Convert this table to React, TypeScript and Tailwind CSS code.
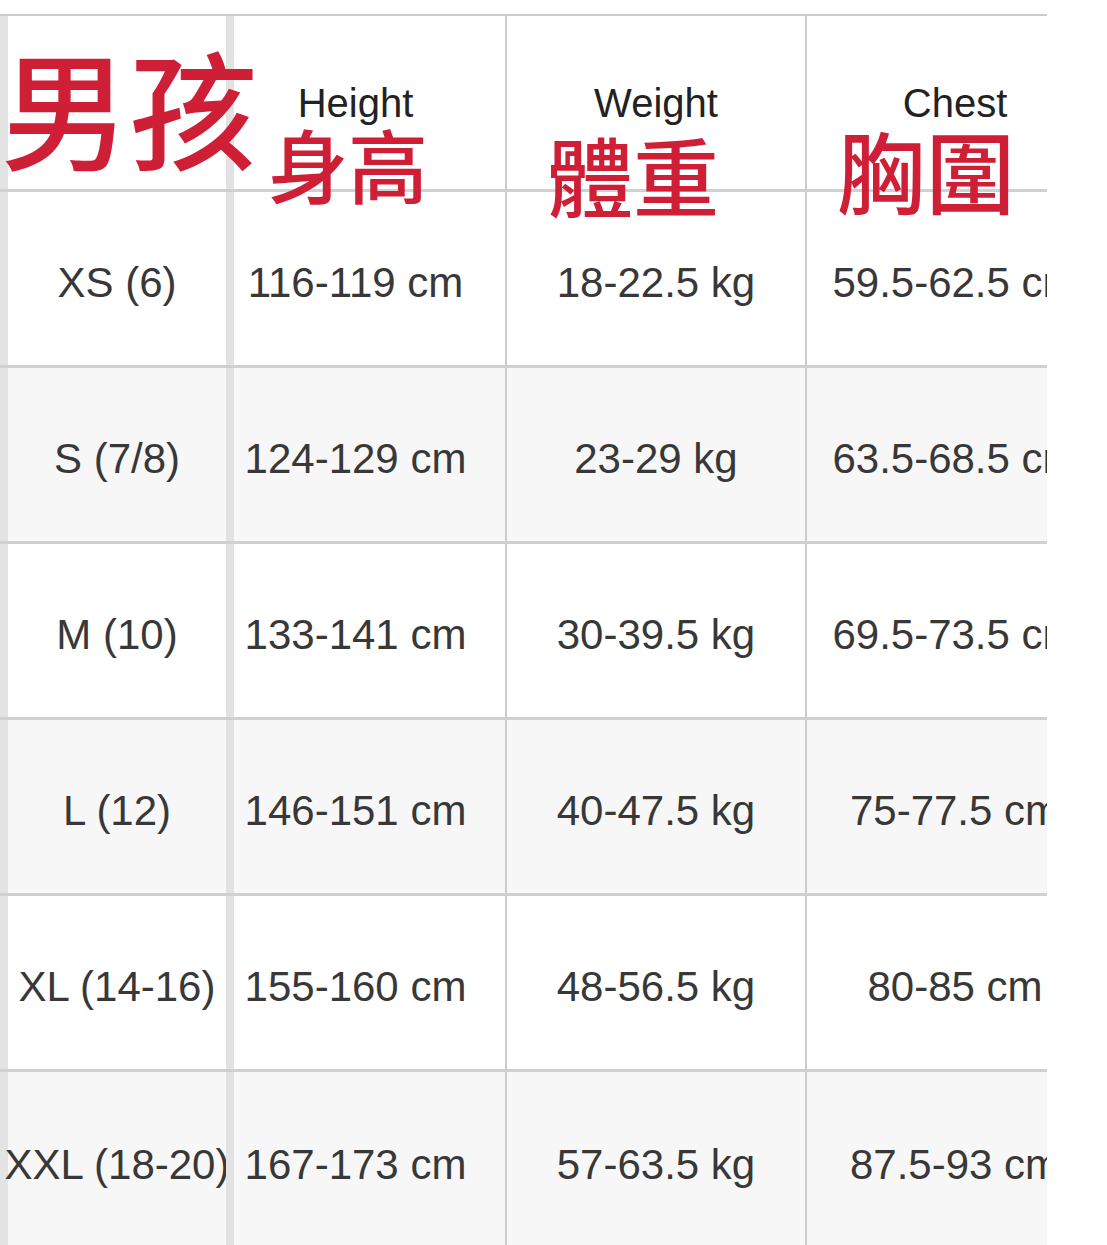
import React from "react";

const rows = [
  ["XS (6)", "116-119 cm", "18-22.5 kg", "59.5-62.5 cm"],
  ["S (7/8)", "124-129 cm", "23-29 kg", "63.5-68.5 cm"],
  ["M (10)", "133-141 cm", "30-39.5 kg", "69.5-73.5 cm"],
  ["L (12)", "146-151 cm", "40-47.5 kg", "75-77.5 cm"],
  ["XL (14-16)", "155-160 cm", "48-56.5 kg", "80-85 cm"],
  ["XXL (18-20)", "167-173 cm", "57-63.5 kg", "87.5-93 cm"],
];

const sans = { fontFamily: '"Liberation Sans", Arial, sans-serif' };
const cjk = { fontFamily: '"Noto Sans CJK TC", "Noto Sans CJK SC", sans-serif' };

function Row({ cells, header, gray, last }: { cells: string[]; header?: boolean; gray?: boolean; last?: boolean }) {
  const text = header ? "text-[40px] text-[#222222]" : "text-[42px] text-[#383838] pt-[8px]";
  return (
    <div
      className={`flex h-[176px] ${last ? "" : "border-b-[3px] border-[#d0d0d0]"} ${gray ? "bg-[#f7f7f7]" : "bg-white"}`}
    >
      <div className={`w-[226px] shrink-0 border-l-[8px] border-[#e3e3e3] flex items-center justify-center whitespace-nowrap ${text}`}>
        {cells[0]}
      </div>
      <div className={`w-[281px] shrink-0 border-l-[8px] border-[#e2e2e2] border-r-[2px] border-r-[#cccccc] flex items-center justify-center pr-[28px] whitespace-nowrap ${text}`}>
        {cells[1]}
      </div>
      <div className={`w-[300px] shrink-0 border-r-[2px] border-[#cccccc] flex items-center justify-center whitespace-nowrap ${text}`}>
        {cells[2]}
      </div>
      <div className={`w-[296px] shrink-0 flex items-center justify-center whitespace-nowrap ${text}`}>
        {cells[3]}
      </div>
    </div>
  );
}

export default function App() {
  return (
    <div className="relative w-[1107px] h-[1245px] bg-white overflow-hidden" style={sans}>
      <div className="pt-[14px]">
        <div className="w-[1047px] overflow-hidden border-t-2 border-[#cccccc]">
          <div className="w-[1103px]">
            <Row cells={["", "Height", "Weight", "Chest"]} header />
            {rows.map((r, i) => (
              <Row key={i} cells={r} gray={i % 2 === 1} last={i === rows.length - 1} />
            ))}
          </div>
        </div>
      </div>
      <span className="absolute left-[1px] top-[42px] text-[128px] leading-none font-medium text-[#cf1f37] whitespace-nowrap" style={cjk}>
        男孩
      </span>
      <span className="absolute left-[268px] top-[122px] text-[80px] leading-none font-medium text-[#cf1f37] whitespace-nowrap" style={cjk}>
        身高
      </span>
      <span className="absolute left-[547px] top-[131px] text-[86px] leading-none font-medium text-[#cf1f37] whitespace-nowrap" style={cjk}>
        體重
      </span>
      <span className="absolute left-[837px] top-[124px] text-[89px] leading-none font-medium text-[#cf1f37] whitespace-nowrap" style={cjk}>
        胸圍
      </span>
    </div>
  );
}
